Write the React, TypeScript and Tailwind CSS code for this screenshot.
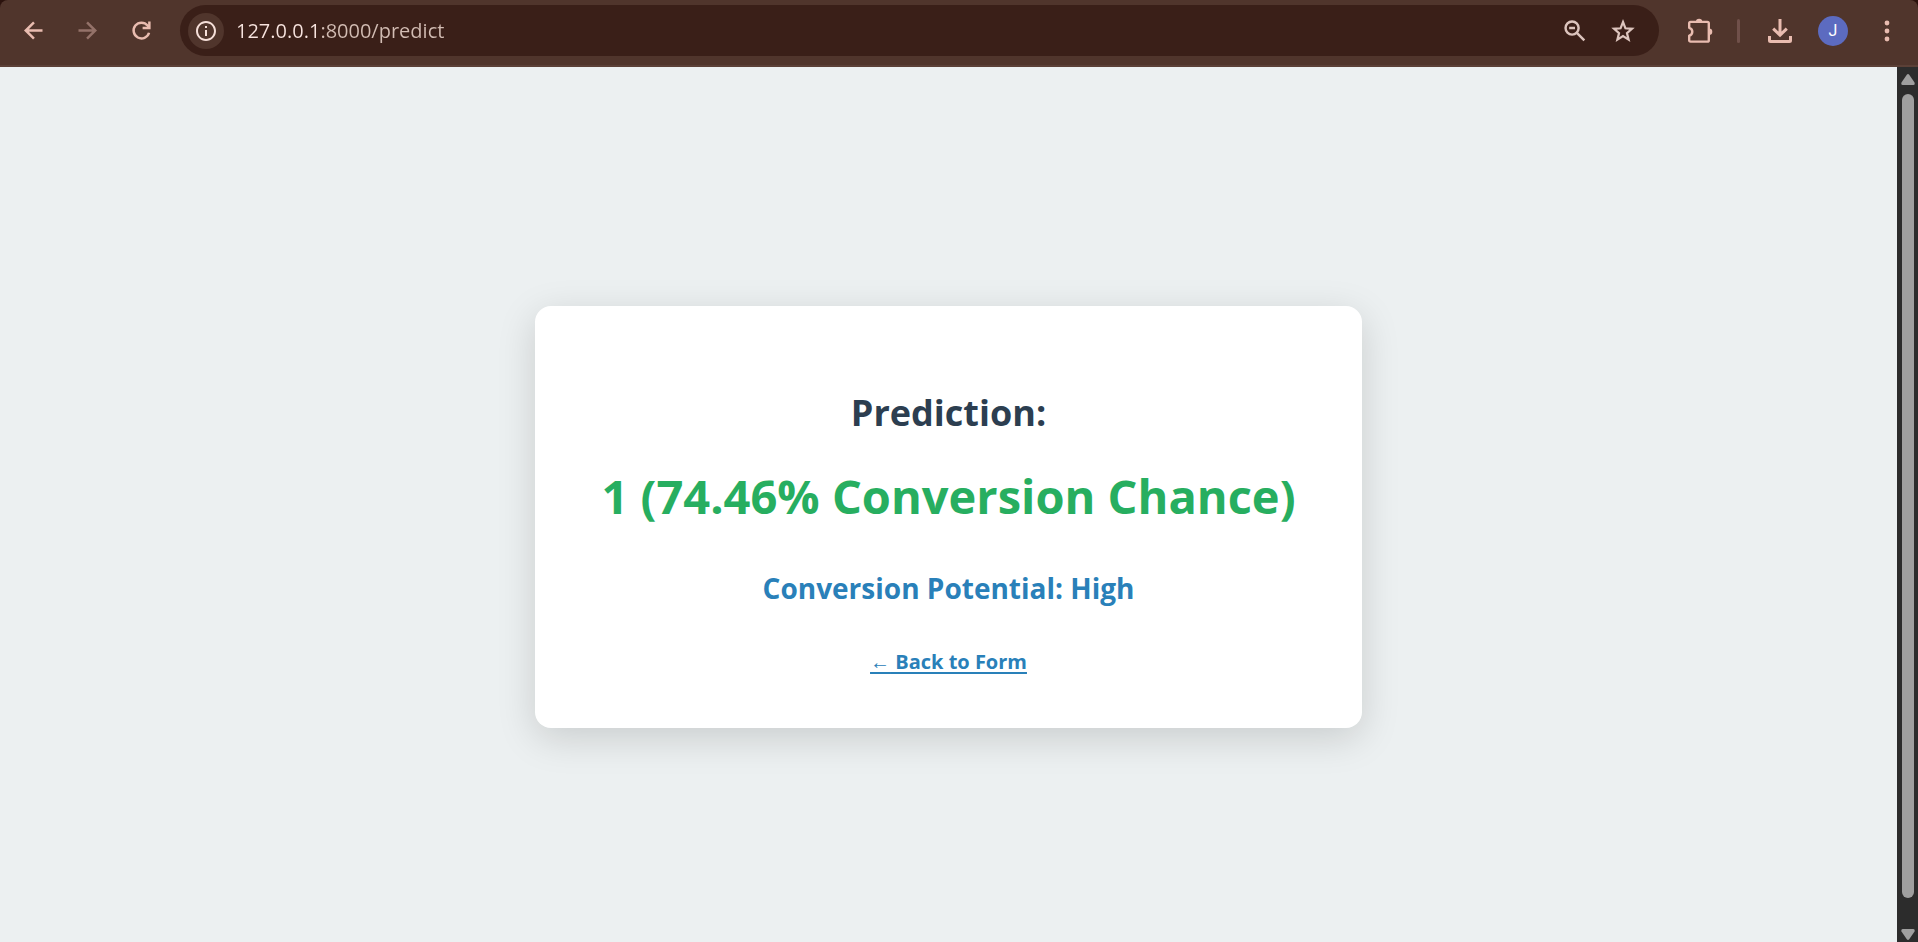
import type { ReactNode } from "react";
import { MdInfoOutline } from "react-icons/md";

function IconButton({ label, className = "", children }: { label: string; className?: string; children: ReactNode }) {
  return (
    <button type="button" aria-label={label} className={`flex size-9 shrink-0 items-center justify-center rounded-full ${className}`}>
      {children}
    </button>
  );
}

function ArrowIcon({ className = "" }: { className?: string }) {
  return (
    <svg viewBox="0 0 24 24" className={`size-[27px] ${className}`} fill="none" stroke="currentColor" strokeWidth="2.2" aria-hidden="true">
      <path d="M20 12 H5.4 M12.4 4.7 L5.1 12 L12.4 19.3" />
    </svg>
  );
}

function ReloadIcon() {
  return (
    <svg viewBox="0 0 24 24" className="size-[27px]" fill="none" stroke="currentColor" strokeWidth="2.2" aria-hidden="true">
      <path d="M18.7 14 A7 7 0 1 1 17.4 7.6 L18.6 9.2" />
      <path d="M19 4 V9.7 H13" />
    </svg>
  );
}

function ZoomOutIcon() {
  return (
    <svg viewBox="0 0 24 24" className="size-7" fill="none" stroke="currentColor" strokeWidth="2.1" aria-hidden="true">
      <circle cx="9.5" cy="9.5" r="5.6" />
      <path d="M13.6 13.6 L20 20 M7 9.5 H12" />
    </svg>
  );
}

function StarIcon() {
  return (
    <svg viewBox="0 0 24 24" className="size-7" fill="none" stroke="currentColor" strokeWidth="1.9" aria-hidden="true">
      <path d="M12 4.3 L14.1 9.7 L19.7 10.1 L15.4 13.8 L16.8 19.4 L12 16.4 L7.2 19.4 L8.6 13.8 L4.3 10.1 L9.9 9.7 Z" />
    </svg>
  );
}

function ExtensionIcon() {
  return (
    <svg viewBox="0 0 26 26" className="size-[26px]" fill="none" aria-hidden="true">
      <path
        d="M3.6 3.9 H20.4 Q21.8 3.9 21.8 5.3 V22.2 Q21.8 23.6 20.4 23.6 H3.6 Q2.2 23.6 2.2 22.2 V17.6 A4 4 0 0 0 2.2 9.8 V5.3 Q2.2 3.9 3.6 3.9 Z"
        stroke="currentColor"
        strokeWidth="2.4"
        strokeLinejoin="round"
      />
      <path d="M8.9 4 A3.2 3.2 0 0 1 15.3 4 Z M22 10.4 A3.3 3.3 0 0 1 22 17 Z" fill="currentColor" />
    </svg>
  );
}

function DownloadIcon() {
  return (
    <svg viewBox="0 0 26 26" className="size-[26px]" fill="none" stroke="currentColor" strokeWidth="3" aria-hidden="true">
      <path d="M13 1 V17 M6.2 10.6 L13 17.2 L19.8 10.6" />
      <path d="M2.5 18 V22.5 Q2.5 23.5 3.5 23.5 H22.5 Q23.5 23.5 23.5 22.5 V18" />
    </svg>
  );
}

function Toolbar() {
  return (
    <header className="shrink-0 bg-[#2b120d]">
      <div className="flex h-[67px] items-center rounded-t-lg border-b-2 border-[#5b4037] bg-[#50352c] pr-[13px] pb-1 pl-[15px] text-[#e9bcb0]">
        <nav aria-label="History" className="flex gap-[18px]">
          <IconButton label="Back"><ArrowIcon /></IconButton>
          <IconButton label="Forward" className="text-[#947269]"><ArrowIcon className="rotate-180" /></IconButton>
          <IconButton label="Reload"><ReloadIcon /></IconButton>
        </nav>
        <div className="ml-[21px] flex h-[51px] flex-1 items-center rounded-full bg-[#3a1f18] pr-[18px] pl-2 text-[#dcc4bd]">
          <IconButton label="Site information" className="bg-[#50352c] text-[#f6dfd9]"><MdInfoOutline className="size-6" /></IconButton>
          <input
            aria-label="Address"
            defaultValue="127.0.0.1:8000/predict"
            className="ml-3 min-w-0 flex-1 bg-linear-to-r from-[#f8e4df] from-[82px] to-[#d3bdb4] to-[82px] bg-clip-text font-[Open_Sans,sans-serif] text-xl leading-8 text-transparent caret-white outline-none"
          />
          <div className="flex gap-3">
            <IconButton label="Zoom out"><ZoomOutIcon /></IconButton>
            <IconButton label="Bookmark this page"><StarIcon /></IconButton>
          </div>
        </div>
        <IconButton label="Extensions" className="ml-[23px]"><ExtensionIcon /></IconButton>
        <span className="ml-[19px] h-6 w-[3px] rounded-full bg-[#70504a]" />
        <IconButton label="Downloads" className="ml-[22px]"><DownloadIcon /></IconButton>
        <button type="button" aria-label="Profile" className="ml-5 size-[30px] rounded-full bg-[#5c6bc0] font-[Roboto,sans-serif] text-base text-white">J</button>
        <IconButton label="Menu" className="ml-[21px]">
          <svg viewBox="0 0 24 24" className="size-6" fill="currentColor" aria-hidden="true">
            <circle cx="12" cy="4" r="2.4" />
            <circle cx="12" cy="12" r="2.4" />
            <circle cx="12" cy="20" r="2.4" />
          </svg>
        </IconButton>
      </div>
    </header>
  );
}

function Scrollbar() {
  return (
    <div className="flex w-[21px] shrink-0 flex-col items-center bg-[#2c2c2c] pt-[7px] pb-0.5 text-[#9f9f9f]">
      <button type="button" aria-label="Scroll up">
        <svg viewBox="0 0 14 11" className="block h-[11px] w-3.5" fill="currentColor" aria-hidden="true">
          <path d="M5.8 0.8 Q7 -0.6 8.2 0.8 L13.5 8.6 Q14.2 10.8 12.4 11 H1.6 Q-0.2 10.8 0.5 8.6 Z" />
        </svg>
      </button>
      <div className="mt-[9px] mb-[30px] w-3 flex-1 rounded-full bg-[#9f9f9f]" />
      <button type="button" aria-label="Scroll down">
        <svg viewBox="0 0 14 12" className="block h-3 w-3.5" fill="currentColor" aria-hidden="true">
          <path d="M5.8 11.2 Q7 12.6 8.2 11.2 L13.5 3.4 Q14.2 1.2 12.4 1 H1.6 Q-0.2 1.2 0.5 3.4 Z" />
        </svg>
      </button>
    </div>
  );
}

export default function App() {
  return (
    <div className="flex min-h-screen flex-col bg-[#ecf0f1]">
      <Toolbar />
      <div className="flex flex-1">
        <main className="flex flex-1 items-center justify-center pt-[25px] font-[Open_Sans,sans-serif] font-bold">
          <section className="flex w-full max-w-[827px] flex-col items-center rounded-2xl bg-white px-10 pt-[81px] pb-[51px] text-center shadow-[0_10px_38px_rgba(0,0,0,0.15)]">
            <h2 className="text-[36px] leading-[52px] text-[#2c3e50]">Prediction:</h2>
            <p className="mt-[23px] text-[47px] leading-[68px] text-[#27ae60]">1 (74.46% Conversion Chance)</p>
            <p className="mt-[38px] text-[28px] leading-10 text-[#2980b9]">Conversion Potential: High</p>
            <a href="/" className="mt-[39px] text-xl leading-[30px] text-[#2980b9] underline decoration-2 underline-offset-3">
              <span className="font-normal">←</span> Back to Form
            </a>
          </section>
        </main>
        <Scrollbar />
      </div>
    </div>
  );
}
